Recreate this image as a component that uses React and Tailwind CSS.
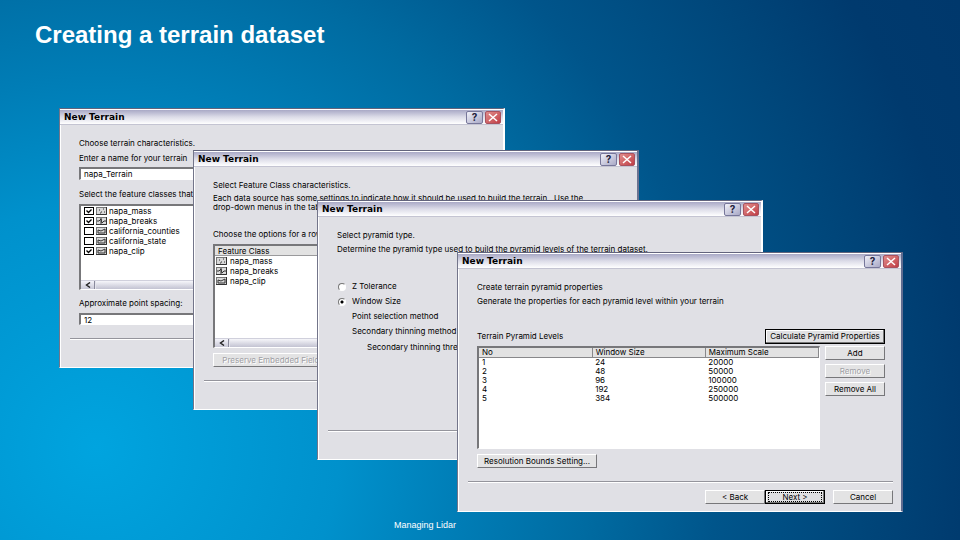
import React from "react";

function TitleButton({ close }) {
  return (
    <button
      type="button"
      aria-label={close ? "Close" : "Help"}
      className={
        close
          ? "flex h-[13px] w-4 items-center justify-center rounded-xs border border-[#a8525e] bg-linear-to-br from-[#e08c8c] to-[#c03c46]"
          : "flex h-[13px] w-[17px] items-center justify-center rounded-xs border border-[#77779a] bg-linear-to-br from-[#f0f0f8] to-[#a9a9c6]"
      }
    >
      {close ? (
        <svg viewBox="0 0 10 9" className="h-[9px] w-[10px]" fill="none" stroke="#fff" strokeWidth="1.5">
          <path d="M1 1 L9 8 M9 1 L1 8" />
        </svg>
      ) : (
        <span className="text-[10px] leading-[10px] font-bold text-[#22223c]">?</span>
      )}
    </button>
  );
}

function Dialog({ place, edge, children }) {
  return (
    <section
      className={`absolute flex h-[260px] w-[446px] flex-col border-t border-b border-l border-t-[#62647c] border-b-white border-l-[#73758a] bg-[#e0e0e5] ${edge} ${place}`}
    >
      <header className="flex h-4 shrink-0 items-center justify-between border-t border-b border-t-white border-b-[#c4c4d2] bg-linear-to-b from-[#a9a9c6] via-[#dcdce8] to-white pr-[2px] pl-1">
        <h2 className="font-['DejaVu_Sans',sans-serif] text-[9px] leading-3 font-bold">New Terrain</h2>
        <div className="flex gap-[2px]">
          <TitleButton />
          <TitleButton close />
        </div>
      </header>
      <div className="flex grow flex-col border-l border-white pr-4 pl-[18px]">{children}</div>
    </section>
  );
}

function Separator() {
  return <hr className="-mr-2 -ml-[9px] h-[2px] border-t border-b border-t-[#94949c] border-b-white" />;
}

function PushButton({ children, size, disabled, strong }) {
  return (
    <button
      type="button"
      disabled={disabled}
      className={`flex shrink-0 items-center justify-center whitespace-nowrap ${size} ${
        strong
          ? "border border-black bg-[#e0e0e2] shadow-[inset_-1px_-1px_0_#777,inset_1px_1px_0_#fff]"
          : "border border-t-white border-r-[#77777a] border-b-[#77777a] border-l-white bg-[#e3e3e4]"
      } ${disabled ? "text-[#a0a0a4] [text-shadow:1px_1px_0_#fff]" : ""}`}
    >
      {children}
    </button>
  );
}

const marks = {
  points: "M3 3h1M7 2h1M5 5h1M8 5h1M4 6h1",
  lines: "M1 4h2l2 -2l1 4l2 -2h2M5 1v6",
  area: "M2 6V3l3 1l4 -2v4z",
};

function LayerIcon({ kind }) {
  return (
    <svg viewBox="0 0 11 8" className="h-2 w-[11px] shrink-0" fill="none">
      <rect x="0.5" y="0.5" width="10" height="7" fill="#d9d9d9" stroke="#777" />
      <path d="M0 7.5H10.5V0" stroke="#333" />
      <path d={marks[kind]} stroke="#333" />
    </svg>
  );
}

function CheckRow({ name, kind, checked }) {
  return (
    <label className="flex h-[10px] items-center gap-[2px] pl-[3px]">
      <span className="relative flex h-2 w-[10px]">
        <input
          type="checkbox"
          defaultChecked={checked}
          className="peer h-2 w-[10px] appearance-none border border-black bg-white"
        />
        <svg
          viewBox="0 0 10 8"
          className="pointer-events-none absolute inset-0 hidden h-2 w-[10px] peer-checked:block"
          fill="none"
          stroke="#000"
        >
          <path d="M2.5 3.5 L4.5 5.5 L7.5 2.5" strokeWidth="1.3" />
        </svg>
      </span>
      <LayerIcon kind={kind} />
      <span>{name}</span>
    </label>
  );
}

function ScrollBar() {
  return (
    <div className="mt-auto flex h-[9px] border-t border-[#d0d0dc] bg-[#e4e4ec]">
      <button
        type="button"
        aria-label="Scroll left"
        className="flex w-[14px] items-center justify-center border-r border-[#8a8a9c] bg-linear-to-b from-[#f4f4fa] to-[#c8c8d6]"
      >
        <svg viewBox="0 0 6 6" className="size-[6px]" fill="none" stroke="#222" strokeWidth="1.4">
          <path d="M5 0.5 L1.5 3 L5 5.5" />
        </svg>
      </button>
      <div className="ml-px grow bg-linear-to-b from-[#f6f6fa] to-[#c3c3d2]" />
    </div>
  );
}

const sunken = "border-t-2 border-l-2 border-r border-b border-t-[#77777a] border-l-[#77777a] border-r-white border-b-white bg-white";

function Characteristics() {
  return (
    <Dialog place="top-[108px] left-[59px]" edge="border-r-2 border-r-white">
      <p className="mt-3 leading-3">Choose terrain characteristics.</p>
      <label htmlFor="terrain-name" className="mt-[3px] leading-3">
        Enter a name for your terrain
      </label>
      <input id="terrain-name" defaultValue="napa_Terrain" className={`mt-[3px] h-[13px] px-[3px] ${sunken}`} />
      <p className="mt-2 leading-3">Select the feature classes that</p>
      <div className={`mt-1 flex h-[86px] flex-col ${sunken}`}>
        <CheckRow name="napa_mass" kind="points" checked />
        <CheckRow name="napa_breaks" kind="lines" checked />
        <CheckRow name="california_counties" kind="area" />
        <CheckRow name="california_state" kind="area" />
        <CheckRow name="napa_clip" kind="area" checked />
        <ScrollBar />
      </div>
      <label htmlFor="spacing" className="mt-[7px] leading-3">
        Approximate point spacing:
      </label>
      <input id="spacing" defaultValue="12" className={`mt-1 mb-[13px] h-3 px-[3px] ${sunken}`} />
      <Separator />
    </Dialog>
  );
}

function FeatureClasses() {
  return (
    <Dialog place="top-[150px] left-[193px]" edge="border-r-2 border-r-[#6a7290]">
      <p className="mt-3 leading-3">Select Feature Class characteristics.</p>
      <p className="mt-[3px] leading-[9px] whitespace-nowrap">
        Each data source has some settings to indicate how it should be used to build the terrain.&nbsp; Use the
        <br />
        drop-down menus in the table
      </p>
      <p className="mt-4 leading-3">Choose the options for a row</p>
      <div className={`mt-1 flex h-[104px] flex-col ${sunken}`}>
        <div className="h-[10px] border-b border-[#9a9a9c] bg-[#e2e2e2] pl-[3px] leading-[10px]">Feature Class</div>
        {[
          ["napa_mass", "points"],
          ["napa_breaks", "lines"],
          ["napa_clip", "area"],
        ].map(([name, kind]) => (
          <div key={name} className="flex h-[10px] items-center gap-[3px] pl-px">
            <LayerIcon kind={kind} />
            {name}
          </div>
        ))}
        <ScrollBar />
      </div>
      <div className="mt-[5px] mb-[13px] flex">
        <PushButton size="h-[14px] w-[120px]" disabled>
          Preserve Embedded Fields
        </PushButton>
      </div>
      <Separator />
    </Dialog>
  );
}

function RadioRow({ label, checked }) {
  return (
    <label className="flex h-[15px] items-center gap-[6px] pl-px">
      <input
        type="radio"
        name="pyramid-type"
        defaultChecked={checked}
        className="size-2 appearance-none rounded-full border border-t-[#777] border-r-white border-b-white border-l-[#777] bg-white checked:bg-[radial-gradient(circle,#000_1px,#fff_2px)]"
      />
      {label}
    </label>
  );
}

function PyramidType() {
  return (
    <Dialog place="top-[200px] left-[317px]" edge="border-r-2 border-r-white">
      <p className="mt-3 leading-3">Select pyramid type.</p>
      <p className="mt-[2px] mb-6 leading-3">
        Determine the pyramid type used to build the pyramid levels of the terrain dataset.
      </p>
      <RadioRow label="Z Tolerance" />
      <RadioRow label="Window Size" checked />
      <p className="pl-[15px] leading-[14px]">Point selection method</p>
      <p className="pl-[15px] leading-4">Secondary thinning method</p>
      <p className="mb-[75px] pl-[30px] leading-4">Secondary thinning threshold</p>
      <Separator />
    </Dialog>
  );
}

const levels = [
  [1, 24, 20000],
  [2, 48, 50000],
  [3, 96, 100000],
  [4, 192, 250000],
  [5, 384, 500000],
];

function PyramidProperties() {
  return (
    <Dialog place="top-[252px] left-[457px]" edge="border-r-2 border-r-[#5f6c90]">
      <p className="mt-3 leading-3">Create terrain pyramid properties</p>
      <p className="mt-[2px] leading-3">Generate the properties for each pyramid level within your terrain</p>
      <div className="mt-[21px] flex h-4 items-center justify-between">
        <span>Terrain Pyramid Levels</span>
        <PushButton size="h-[15px] w-[120px]" strong>
          Calculate Pyramid Properties
        </PushButton>
      </div>
      <div className="mt-[2px] flex gap-[5px]">
        <div className={`h-[103px] grow ${sunken}`}>
          <table className="w-full table-fixed border-collapse">
            <thead>
              <tr className="h-[9px]">
                {["No", "Window Size", "Maximum Scale"].map((h) => (
                  <th
                    key={h}
                    className="border-r border-b border-[#88888a] bg-[#e2e2e2] py-0 pl-[3px] text-left leading-[9px] font-normal"
                  >
                    {h}
                  </th>
                ))}
              </tr>
            </thead>
            <tbody>
              {levels.map((row) => (
                <tr key={row[0]} className="h-[9px]">
                  {row.map((v) => (
                    <td key={v} className="py-0 pl-[3px] leading-[9px]">
                      {v}
                    </td>
                  ))}
                </tr>
              ))}
            </tbody>
          </table>
        </div>
        <div className="flex flex-col gap-1">
          <PushButton size="h-[14px] w-[60px]">Add</PushButton>
          <PushButton size="h-[14px] w-[60px]" disabled>
            Remove
          </PushButton>
          <PushButton size="h-[14px] w-[60px]">Remove All</PushButton>
        </div>
      </div>
      <div className="mt-[5px] mb-[13px] flex">
        <PushButton size="h-[14px] w-[120px]">Resolution Bounds Setting...</PushButton>
      </div>
      <Separator />
      <div className="-mr-2 mt-[7px] flex justify-end">
        <PushButton size="h-[14px] w-[60px]">&lt; Back</PushButton>
        <PushButton size="mr-2 h-[14px] w-[60px]" strong>
          <span className="w-[54px] border border-dotted border-black leading-2">Next &gt;</span>
        </PushButton>
        <PushButton size="h-[14px] w-[60px]">Cancel</PushButton>
      </div>
    </Dialog>
  );
}

export default function App() {
  return (
    <main className="relative flex min-h-screen flex-col justify-between overflow-hidden bg-[radial-gradient(circle_at_10%_83%,#00a4df_0%,#0091cc_25%,#007db6_38%,#006ba1_51%,#00558b_64%,#00477b_78%,#003a6e_90%,#00386c_100%)] px-[35px] pt-5 pb-2 font-['Liberation_Sans',sans-serif]">
      <h1 className="text-[24px] leading-[30px] font-bold text-white">Creating a terrain dataset</h1>
      <div className="font-['Inter',sans-serif] text-[8px] leading-[9px] text-black">
        <Characteristics />
        <FeatureClasses />
        <PyramidType />
        <PyramidProperties />
      </div>
      <footer className="-ml-[110px] text-center text-[9px] leading-[14px] text-white">Managing Lidar</footer>
    </main>
  );
}
